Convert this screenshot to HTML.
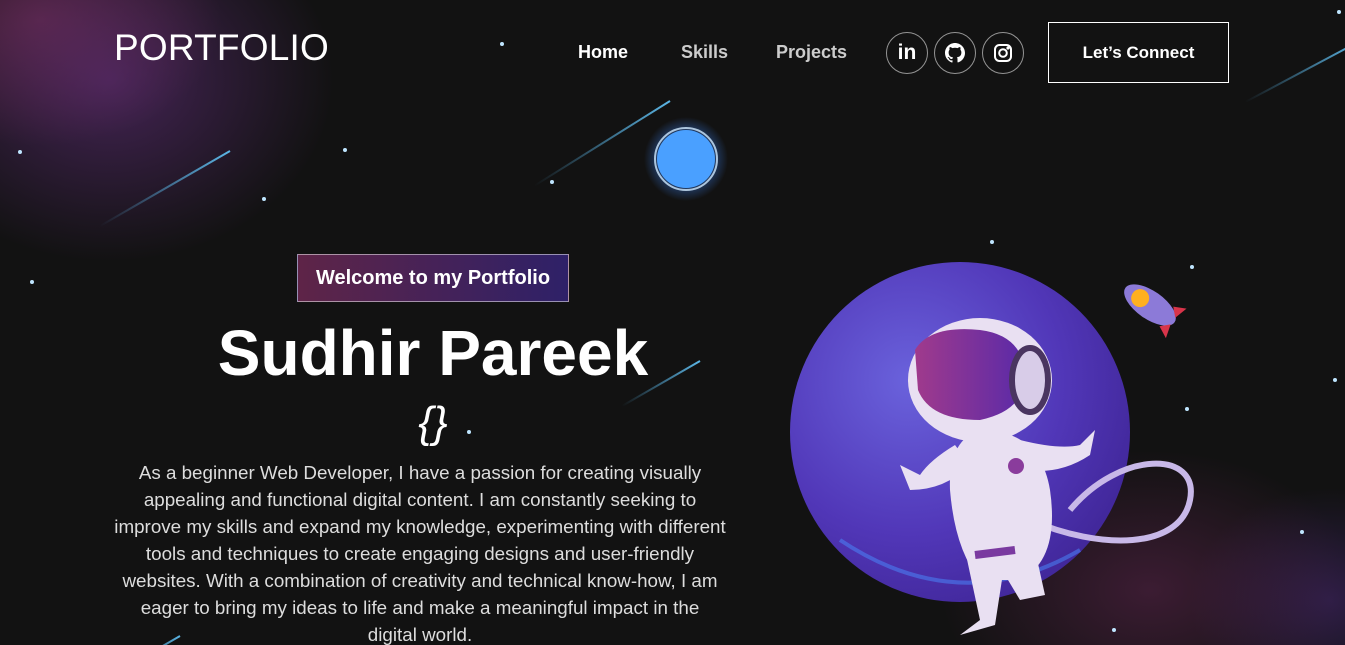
<!DOCTYPE html>
<html><head><meta charset="utf-8"><style>
*{margin:0;padding:0;box-sizing:border-box}
html,body{width:1345px;height:645px;overflow:hidden}
body{background:#121212;font-family:"Liberation Sans",sans-serif;color:#fff;position:relative}
.bg{position:absolute;inset:0;background:
radial-gradient(ellipse 320px 260px at 110px 80px,rgba(110,50,140,.55),transparent 70%),
radial-gradient(ellipse 260px 180px at 40px 20px,rgba(140,50,90,.5),transparent 70%),
radial-gradient(ellipse 300px 200px at 1150px 590px,rgba(110,40,90,.45),transparent 70%),
radial-gradient(ellipse 200px 160px at 1330px 600px,rgba(70,40,120,.5),transparent 70%);}
.logo{position:absolute;left:114px;top:27px;font-size:37px;letter-spacing:.2px}
.nav a{position:absolute;top:42px;font-size:18px;font-weight:bold;color:#fff;text-decoration:none}
.ic{position:absolute;top:32px;width:42px;height:42px;border:1px solid rgba(255,255,255,.55);border-radius:50%;display:flex;align-items:center;justify-content:center}
.btn{position:absolute;left:1048px;top:22px;width:181px;height:61px;border:1px solid #fff;display:flex;align-items:center;justify-content:center;font-weight:bold;font-size:17px}
.badge{position:absolute;left:297px;top:254px;width:272px;height:48px;border:1px solid rgba(255,255,255,.5);background:linear-gradient(90deg,rgba(170,54,124,.5),rgba(74,47,189,.5));font-weight:bold;font-size:20px;display:flex;align-items:center;justify-content:center}
h1{position:absolute;left:133px;width:600px;text-align:center;top:316px;font-size:64px;font-weight:bold}
.br{position:absolute;left:133px;width:600px;text-align:center;top:398px;font-size:44px;font-style:italic}
p{position:absolute;left:70px;width:700px;text-align:center;top:459px;font-size:18.8px;line-height:27px;color:#ddd;white-space:nowrap}
.star{position:absolute;width:4px;height:4px;border-radius:50%;background:#bfe6ff}
.streak{position:absolute;height:2px;background:linear-gradient(90deg,transparent,#5bb6e6);transform-origin:right center}
</style></head><body>
<div class="bg"></div>
<div class="streak" style="left:80px;top:150px;width:150px;transform:rotate(-30deg)"></div>
<div class="streak" style="left:510px;top:100px;width:160px;transform:rotate(-32deg)"></div>
<div class="streak" style="left:1230px;top:40px;width:130px;transform:rotate(-28deg)"></div>
<div class="streak" style="left:610px;top:360px;width:90px;transform:rotate(-30deg)"></div>
<div class="streak" style="left:120px;top:635px;width:60px;transform:rotate(-30deg)"></div>
<div class="star" style="left:500px;top:42px"></div><div class="star" style="left:343px;top:148px"></div>
<div class="star" style="left:550px;top:180px"></div><div class="star" style="left:262px;top:197px"></div>
<div class="star" style="left:18px;top:150px"></div><div class="star" style="left:30px;top:280px"></div>
<div class="star" style="left:990px;top:240px"></div><div class="star" style="left:1190px;top:265px"></div>
<div class="star" style="left:1333px;top:378px"></div><div class="star" style="left:1185px;top:407px"></div>
<div class="star" style="left:1300px;top:530px"></div><div class="star" style="left:1112px;top:628px"></div>
<div class="star" style="left:467px;top:430px"></div><div class="star" style="left:1337px;top:10px"></div>
<div class="logo">PORTFOLIO</div>
<div class="nav"><a style="left:578px">Home</a><a style="left:681px;color:#ccc">Skills</a><a style="left:776px;color:#ccc">Projects</a></div>
<div class="ic" style="left:886px"><span style="font-weight:bold;font-size:21px">in</span></div>
<div class="ic" style="left:934px"><svg width="20" height="20" viewBox="0 0 16 16" fill="#fff"><path d="M8 0C3.6 0 0 3.6 0 8c0 3.5 2.3 6.5 5.5 7.6.4.1.5-.2.5-.4v-1.4c-2.2.5-2.7-1-2.7-1-.4-.9-.9-1.2-.9-1.2-.7-.5.1-.5.1-.5.8.1 1.2.8 1.2.8.7 1.3 1.9.9 2.3.7.1-.5.3-.9.5-1.1-1.8-.2-3.6-.9-3.6-4 0-.9.3-1.6.8-2.1-.1-.2-.4-1 .1-2.1 0 0 .7-.2 2.2.8.6-.2 1.3-.3 2-.3s1.4.1 2 .3c1.5-1 2.2-.8 2.2-.8.4 1.1.2 1.9.1 2.1.5.6.8 1.3.8 2.1 0 3.1-1.9 3.7-3.6 3.9.3.3.5.8.5 1.5v2.2c0 .2.1.5.6.4C13.7 14.5 16 11.5 16 8c0-4.4-3.6-8-8-8z"/></svg></div>
<div class="ic" style="left:982px"><svg width="20" height="20" viewBox="0 0 20 20" fill="none" stroke="#fff" stroke-width="2"><rect x="2" y="2" width="16" height="16" rx="4.5"/><circle cx="10" cy="10" r="3.8"/><circle cx="15" cy="5" r=".6" fill="#fff"/></svg></div>
<div class="btn">Let’s Connect</div>
<svg style="position:absolute;left:630px;top:115px" width="120" height="100"><defs><radialGradient id="g1"><stop offset="0" stop-color="#6fc4ff"/><stop offset=".5" stop-color="#3a7ee8"/><stop offset="1" stop-color="#3a7ee8" stop-opacity="0"/></radialGradient></defs><circle cx="56" cy="44" r="42" fill="url(#g1)" opacity=".6"/><circle cx="56" cy="44" r="29" fill="#4aa0ff"/><circle cx="56" cy="44" r="31" fill="none" stroke="#cfeaff" stroke-width="2" opacity=".8"/></svg>
<div class="badge">Welcome to my Portfolio</div>
<h1>Sudhir Pareek</h1>
<div class="br">{}</div>
<p>As a beginner Web Developer, I have a passion for creating visually<br>appealing and functional digital content. I am constantly seeking to<br>improve my skills and expand my knowledge, experimenting with different<br>tools and techniques to create engaging designs and user-friendly<br>websites. With a combination of creativity and technical know-how, I am<br>eager to bring my ideas to life and make a meaningful impact in the<br>digital world.</p>
<svg style="position:absolute;left:780px;top:250px" width="440" height="395" viewBox="0 0 440 395">
<defs><radialGradient id="pl" cx=".35" cy=".35" r=".75"><stop offset="0" stop-color="#6a62dc"/><stop offset=".6" stop-color="#5137b8"/><stop offset="1" stop-color="#3f2596"/></radialGradient>
<linearGradient id="vis" x1="0" x2="1"><stop offset="0" stop-color="#a03a8c"/><stop offset="1" stop-color="#5a2aa8"/></linearGradient></defs>
<circle cx="180" cy="182" r="170" fill="url(#pl)"/>
<path d="M60 290 Q180 370 300 300" stroke="#4a8bff" stroke-width="4" fill="none" opacity=".5"/>
<path d="M290 260 C340 200 420 200 410 250 C400 300 320 300 250 270" stroke="#c8b8e8" stroke-width="6" fill="none"/>
<g fill="#e9e0f2">
<ellipse cx="200" cy="130" rx="72" ry="62"/>
<path d="M200 180 Q260 180 270 240 Q280 310 240 330 L200 330 Q175 300 170 240 Q168 190 200 180z"/>
<path d="M175 195 Q150 210 140 225 L120 215 L130 240 Q165 240 190 215z"/>
<path d="M240 190 Q280 200 300 195 L315 180 L310 205 Q280 225 245 220z"/>
<path d="M210 300 L240 350 L265 345 L255 300z"/>
<path d="M185 300 L200 370 L180 385 L215 375 L225 310z"/>
</g>
<path d="M135 100 Q150 75 200 80 Q240 85 245 120 Q248 160 200 170 Q150 170 138 140z" fill="url(#vis)"/>
<ellipse cx="250" cy="130" rx="18" ry="32" fill="#d8cce8" stroke="#4a3560" stroke-width="6"/>
<circle cx="236" cy="216" r="8" fill="#8a3c9c"/>
<path d="M195 305 L235 300" stroke="#7a3aa0" stroke-width="8"/>
<g transform="translate(370,55) rotate(35)"><ellipse cx="0" cy="0" rx="30" ry="14" fill="#8c7ad8"/><circle cx="-12" cy="0" r="9" fill="#ffb020"/><path d="M20 -12 L32 -18 L28 -4z M20 12 L32 18 L28 4z" fill="#d8344a"/></g>
</svg>
</body></html>
